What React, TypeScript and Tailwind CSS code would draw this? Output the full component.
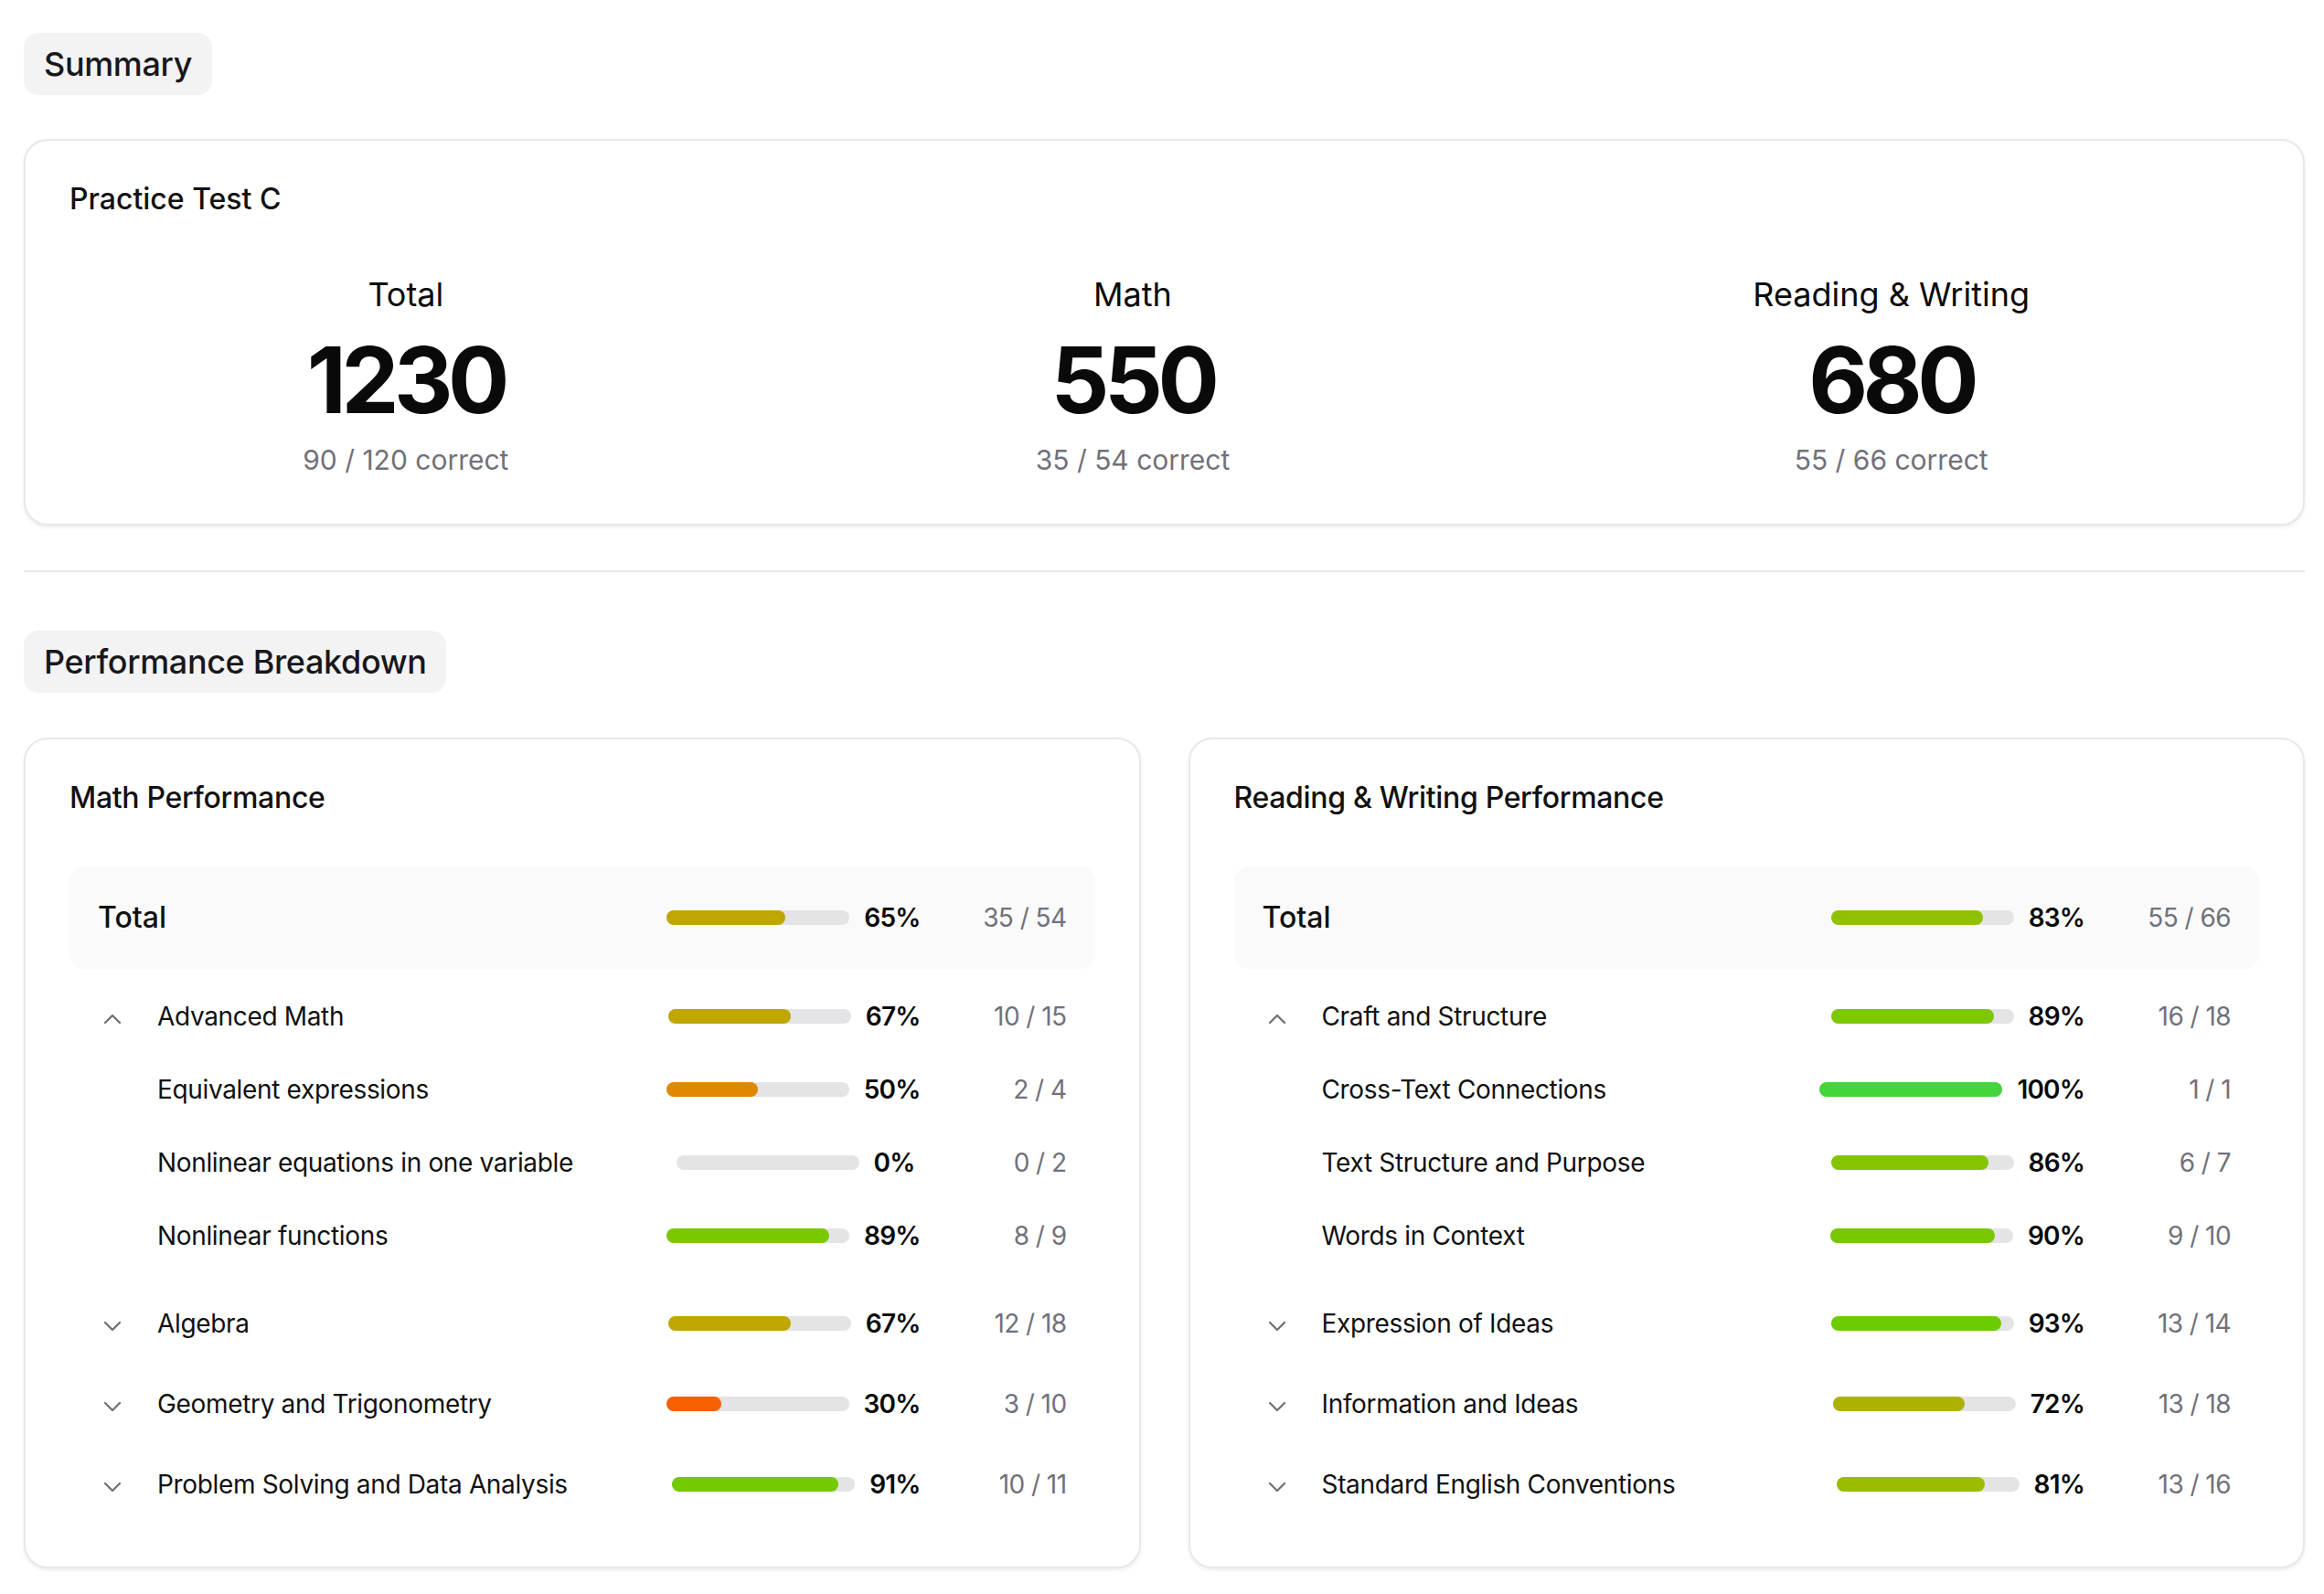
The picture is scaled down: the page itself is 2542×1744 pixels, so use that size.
import React from 'react';
import { ChevronDown, ChevronUp } from 'lucide-react';

type Row = {
  label: string;
  pct: number;
  correct: number;
  total: number;
  color: string;
};

type Group = Row & {
  open?: boolean;
  items?: Row[];
};

type Section = {
  title: string;
  total: Row;
  groups: Group[];
};

const math: Section = {
  title: 'Math Performance',
  total: { label: 'Total', pct: 65, correct: 35, total: 54, color: '#c0a600' },
  groups: [
    {
      label: 'Advanced Math',
      pct: 67,
      correct: 10,
      total: 15,
      color: '#c0a600',
      open: true,
      items: [
        { label: 'Equivalent expressions', pct: 50, correct: 2, total: 4, color: '#e08800' },
        { label: 'Nonlinear equations in one variable', pct: 0, correct: 0, total: 2, color: '#f24a00' },
        { label: 'Nonlinear functions', pct: 89, correct: 8, total: 9, color: '#7cc800' },
      ],
    },
    { label: 'Algebra', pct: 67, correct: 12, total: 18, color: '#c0a600' },
    { label: 'Geometry and Trigonometry', pct: 30, correct: 3, total: 10, color: '#f56000' },
    { label: 'Problem Solving and Data Analysis', pct: 91, correct: 10, total: 11, color: '#74c900' },
  ],
};

const readingWriting: Section = {
  title: 'Reading & Writing Performance',
  total: { label: 'Total', pct: 83, correct: 55, total: 66, color: '#90c000' },
  groups: [
    {
      label: 'Craft and Structure',
      pct: 89,
      correct: 16,
      total: 18,
      color: '#7dc800',
      open: true,
      items: [
        { label: 'Cross-Text Connections', pct: 100, correct: 1, total: 1, color: '#44d43c' },
        { label: 'Text Structure and Purpose', pct: 86, correct: 6, total: 7, color: '#85c400' },
        { label: 'Words in Context', pct: 90, correct: 9, total: 10, color: '#78c800' },
      ],
    },
    { label: 'Expression of Ideas', pct: 93, correct: 13, total: 14, color: '#6ccc00' },
    { label: 'Information and Ideas', pct: 72, correct: 13, total: 18, color: '#adb200' },
    { label: 'Standard English Conventions', pct: 81, correct: 13, total: 16, color: '#9bbd00' },
  ],
};

const scores = [
  { label: 'Total', score: 1230, correct: 90, total: 120, width: 'w-[229px]' },
  { label: 'Math', score: 550, correct: 35, total: 54, width: 'w-[212px]' },
  { label: 'Reading & Writing', score: 680, correct: 55, total: 66, width: 'w-[298px]' },
];

function Pill({ children }: { children: React.ReactNode }) {
  return (
    <div className="inline-flex h-[68px] items-center rounded-[16px] bg-[#f3f3f4] px-[22px] text-[36px] font-medium leading-none tracking-[-0.01em] text-[#18181b]">
      {children}
    </div>
  );
}

function Card({ children, className = '' }: { children: React.ReactNode; className?: string }) {
  return (
    <div
      className={`rounded-[26px] border-2 border-[#e8e8e8] bg-white shadow-[0_2px_4px_rgba(0,0,0,0.07)] ${className}`}
    >
      {children}
    </div>
  );
}

function Stats({ row }: { row: Row }) {
  return (
    <>
      <div className="relative h-[16px] w-[200px] shrink-0 rounded-full bg-[#e4e4e7]">
        {row.pct > 0 && (
          <div
            className="h-full rounded-full"
            style={{ width: `${row.pct}%`, backgroundColor: row.color }}
          />
        )}
      </div>
      <span className="ml-[16px] min-w-[51px] text-[28px] font-semibold leading-none tracking-[-0.03em] text-[#0a0a0a]">
        {row.pct}%
      </span>
      <span className="ml-[16px] w-[144px] text-right text-[28px] leading-none tracking-[-0.02em] text-[#71717a]">
        {row.correct} / {row.total}
      </span>
    </>
  );
}

function SkillRow({ row, icon, tall }: { row: Row; icon?: React.ReactNode; tall?: boolean }) {
  return (
    <div className={`flex items-center px-[31px] ${tall ? 'h-[80px]' : 'h-[72px]'}`}>
      <div className="flex w-[32px] shrink-0 justify-center text-[#71717a]">{icon}</div>
      <span className="ml-[33px] flex-1 text-[28px] leading-none tracking-[-0.012em] text-[#111111]">
        {row.label}
      </span>
      <Stats row={row} />
    </div>
  );
}

function SectionCard({ section }: { section: Section }) {
  return (
    <Card className="px-[48px] pb-[54px] pt-[48px]">
      <h3 className="text-[32px] font-medium leading-[32px] tracking-[-0.01em] text-[#111111]">
        {section.title}
      </h3>

      <div className="mt-[59px] flex h-[112px] items-center rounded-[16px] bg-[#fafafa] px-[31px]">
        <span className="flex-1 text-[32px] font-medium leading-none text-[#111111]">
          {section.total.label}
        </span>
        <Stats row={section.total} />
      </div>

      <div className="mt-[16px] flex flex-col gap-[16px]">
        {section.groups.map((g) => (
          <div key={g.label}>
            <SkillRow
              row={g}
              icon={
                g.open ? (
                  <ChevronUp size={32} strokeWidth={1.75} className="mt-[6px]" />
                ) : (
                  <ChevronDown size={32} strokeWidth={1.75} className="mt-[6px]" />
                )
              }
            />
            {g.open && g.items && (
              <div className="py-[4px]">
                {g.items.map((item) => (
                  <SkillRow key={item.label} row={item} tall />
                ))}
              </div>
            )}
          </div>
        ))}
      </div>
    </Card>
  );
}

export default function App() {
  return (
    <div className="min-h-screen bg-white pb-[28px] pl-[26px] pr-[21px] pt-[36px] font-['Inter','Noto_Sans',sans-serif] text-[#111111]">
      <Pill>Summary</Pill>

      <Card className="mt-[48px] px-[48px] pb-[50px] pt-[48px]">
        <h2 className="text-[32px] font-medium leading-[32px]">Practice Test C</h2>
        <div className="-mx-[34px] mt-[64px] flex justify-around">
          {scores.map((s) => (
            <div key={s.label} className={`flex flex-col items-center ${s.width}`}>
              <span className="whitespace-nowrap text-[36px] leading-[48px] text-[#0a0a0a]">{s.label}</span>
              <span className="mt-[20px] text-[100px] font-bold leading-[100px] tracking-[-0.055em] text-[#0a0a0a]">
                {s.score}
              </span>
              <span className="mt-[17px] whitespace-nowrap text-[30px] leading-[40px] text-[#71717a]">
                {s.correct} / {s.total} correct
              </span>
            </div>
          ))}
        </div>
      </Card>

      <div className="mt-[49px] h-[2px] bg-[#e6e6e6]" />

      <div className="mt-[64px]">
        <Pill>Performance Breakdown</Pill>
      </div>

      <div className="mt-[49px] grid grid-cols-2 gap-[52px]">
        <SectionCard section={math} />
        <SectionCard section={readingWriting} />
      </div>
    </div>
  );
}
